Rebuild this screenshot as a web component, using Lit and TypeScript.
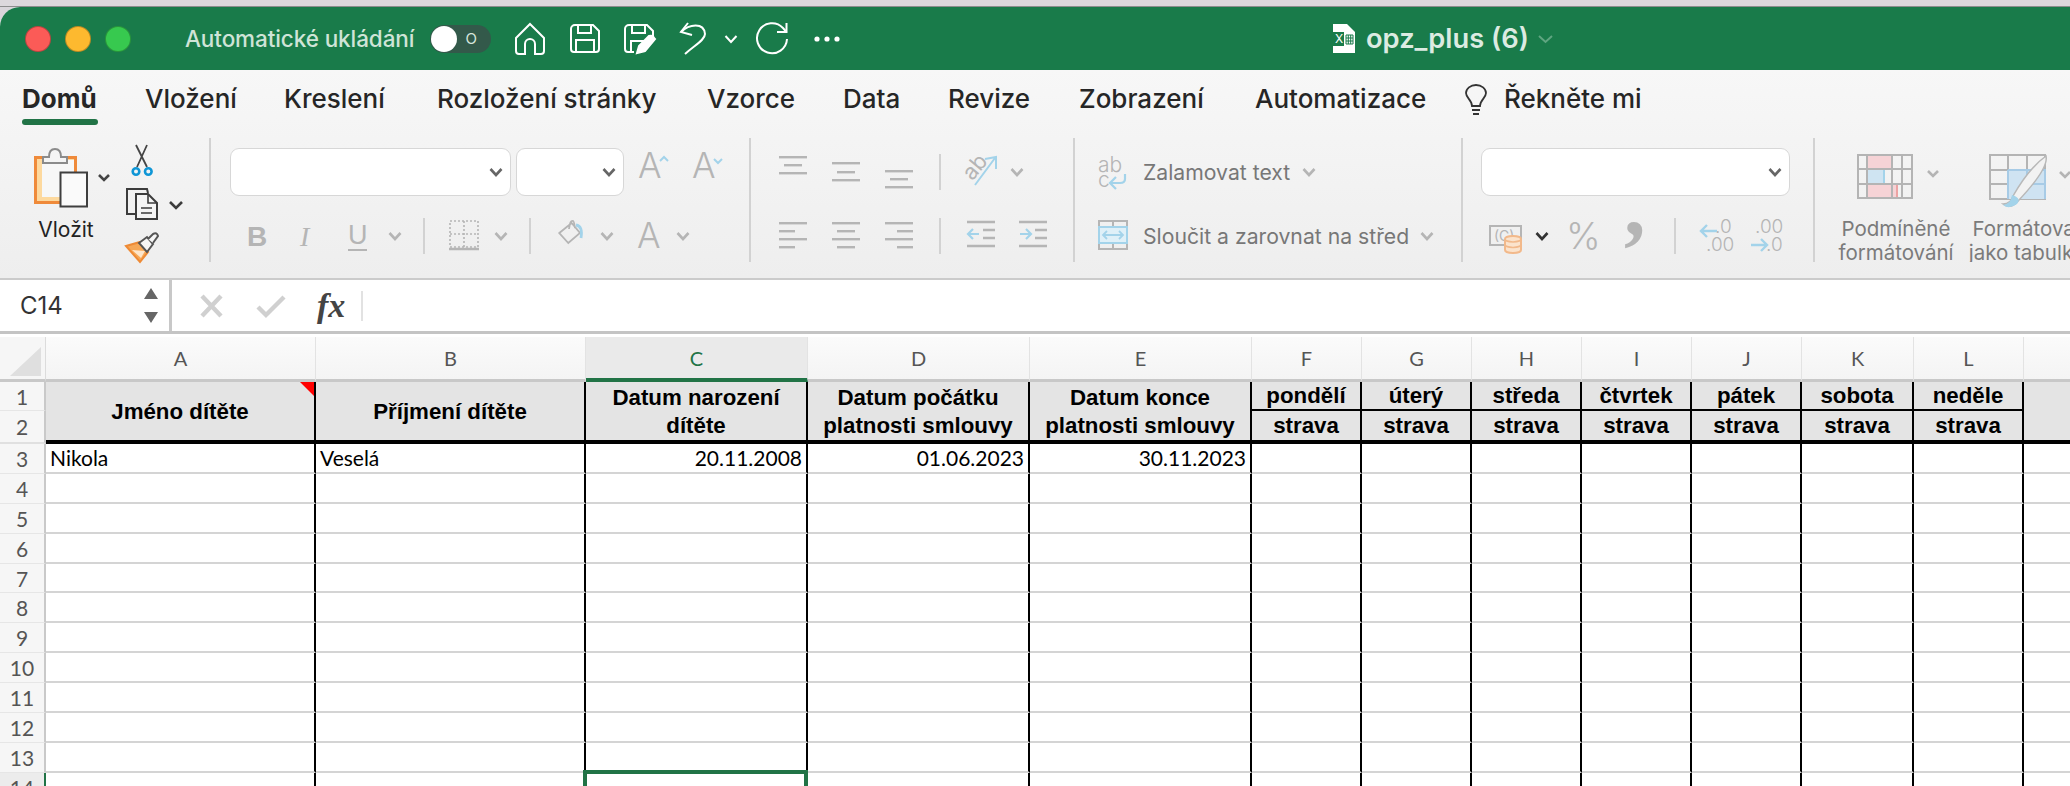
import { LitElement, html, css, svg } from "lit";
import { customElement } from "lit/decorators.js";

const GRAY = "#b5b5b5";
const BLUE = "#a3d3ea";

const chev = (color = GRAY) => html`<svg class="chev" width="14" height="36" viewBox="0 0 14 36"><path d="M1.5 15 L7 21 L12.5 15" fill="none" stroke=${color} stroke-width="2.6"/></svg>`;
const lines = (rows: [number, number, number][], w = 30) => html`<svg width=${w} height="36" viewBox="0 0 ${w} 36">${rows.map(([y, a, b]) => svg`<rect x=${a} y=${y} width=${b - a} height="2.4" fill=${GRAY}/>`)}</svg>`;

const COLS = ["A", "B", "C", "D", "E", "F", "G", "H", "I", "J", "K", "L", ""];
const DAYS = ["pondělí", "úterý", "středa", "čtvrtek", "pátek", "sobota", "neděle"];

@customElement("app-root")
export class AppRoot extends LitElement {
  static styles = css`
    :host { display: block; width: 2070px; height: 786px; overflow: hidden; background: #d9d5da; font-family: Inter, "Liberation Sans", sans-serif; position: relative; }
    svg { display: block; overflow: visible; }
    .strip { height: 6px; background: #dcd8dc; border-bottom: 1px solid #8d8d8d; }
    .win { background: #fff; border-top-left-radius: 20px; overflow: hidden; }
    .title { height: 63px; background: #197b4a; display: grid; align-items: center; padding-left: 25px;
      grid-template-columns: 40px 40px 80px 245px 85px 55px 54px 55px 45px 32px 58px 519px 33px 172px 40px; }
    .light { width: 26px; height: 26px; border-radius: 50%; box-sizing: border-box; border: 1px solid rgba(0,0,0,.25); }
    .red { background: #fb5b57; } .yellow { background: #fdb92f; } .green { background: #37c94f; }
    .auto { color: #cfe4d7; font-size: 22.5px; font-weight: 500; letter-spacing: -.1px; white-space: nowrap; }
    .toggle { width: 61px; height: 28px; border-radius: 14px; background: #33594a; position: relative; display: flex; align-items: center; justify-content: flex-end; padding-right: 14px; box-sizing: border-box; color: #d6e6dc; font-size: 15px; }
    .knob { position: absolute; left: 1px; top: 1px; width: 26px; height: 26px; border-radius: 50%; background: #fff; }
    .fname { color: #dcebe2; font-size: 27.3px; font-weight: 600; white-space: nowrap; }

    .ribbon { height: 210px; box-sizing: border-box; background: linear-gradient(#f7f7f7, #eeeeee); border-bottom: 2px solid #cbcbcb; }
    .tabs { height: 60px; display: grid; padding-left: 22px; color: #262626; font-size: 26px; font-weight: 500;
      grid-template-columns: 123px 139px 153px 270px 136px 105px 131px 176px 210px 39px auto; }
    .tab { padding-top: 13px; line-height: 32px; white-space: nowrap; }
    .tab.on { font-weight: 700; }
    .bar { width: 76px; height: 6px; border-radius: 3px; background: #217346; margin-top: 4px; }
    .bulb { padding-top: 15px; }
    .groups { display: flex; height: 124px; margin-top: 8px; }
    .sep { width: 2px; height: 124px; background: #d2d2d2; flex: none; }
    .vsep { width: 2px; height: 36px; background: #d2d2d2; }
    .clip { width: 209px; flex: none; display: flex; padding-left: 28px; box-sizing: border-box; }
    .paste { width: 98px; padding-top: 10px; }
    .vlozit { width: 76px; text-align: center; font-size: 21px; color: #222; margin-top: 10px; line-height: 24px; }
    .small { display: flex; flex-direction: column; gap: 12px; padding-top: 6px; }
    .g-font { width: 538px; flex: none; padding-top: 10px; box-sizing: border-box; }
    .sel { height: 48px; box-sizing: border-box; background: #fff; border: 1.5px solid #d7d7d7; border-radius: 9px; display: flex; align-items: center; justify-content: flex-end; padding-right: 7px; }
    .r1 { display: grid; height: 48px; padding-left: 19px; grid-template-columns: 286px 122px 54px 60px; }
    .s1 { width: 281px; } .s2 { width: 108px; }
    .r2 { display: grid; height: 36px; margin-top: 22px; padding-left: 37px; align-items: center;
      grid-template-columns: 52px 48px 40px 35px 26px 45px 35px 29px 42px 37px 39px 20px; }
    .g-align { width: 322px; flex: none; padding: 16px 0 0 28px; box-sizing: border-box; }
    .ar { display: grid; height: 36px; grid-template-columns: 53px 53px 54px 25px 46px 20px; }
    .ar2 { margin-top: 28px; grid-template-columns: 53px 53px 54px 27px 52px 30px; }
    .g-wrap { width: 386px; flex: none; padding: 16px 0 0 23px; box-sizing: border-box; }
    .wr { display: grid; height: 36px; align-items: center; grid-template-columns: 45px 159px 20px; color: #777; font-size: 21.2px; white-space: nowrap; }
    .wr2 { margin-top: 28px; grid-template-columns: 45px 277px 20px; }
    .g-num { width: 350px; flex: none; padding: 10px 0 0 18px; box-sizing: border-box; }
    .s3 { width: 309px; }
    .nr { display: grid; height: 36px; margin-top: 22px; padding-left: 8px; align-items: center; grid-template-columns: 46px 31px 61px 47px 25px 51px 40px; }
    .g-style { flex: 1; display: grid; grid-template-columns: 127px 126px; padding-left: 22px; box-sizing: border-box; color: #7b7b7b; font-size: 20.5px; line-height: 24px; overflow: hidden; white-space: nowrap; }
    .st-ic { height: 79px; box-sizing: border-box; padding: 16px 0 0 20px; }
    .st-ic.second { padding-left: 25px; }
    .st-t { width: 118px; text-align: center; }
    .st-t2 { width: 126px; }

    .fbar { height: 54px; box-sizing: border-box; display: flex; background: #fff; border-bottom: 3px solid #c4c4c4; }
    .name { width: 172px; flex: none; box-sizing: border-box; border-right: 3px solid #c8c8c8; padding: 0 10px 0 20px; display: flex; align-items: center; justify-content: space-between; font-size: 24px; color: #333; }
    .fx { display: grid; grid-template-columns: 56px 61px 44px 2px; align-items: center; padding-left: 28px; }
    .fxt { font-family: "Liberation Serif", serif; font-style: italic; font-weight: 700; font-size: 34px; color: #444; line-height: 34px; }
    .fxs { width: 2px; height: 30px; background: #e2e2e2; }

    .gap { height: 3px; background: #fff; }
    .grid { display: grid; background: #fff; font-family: Lato, "Liberation Sans", sans-serif;
      grid-template-columns: 46px 270px 270px 222px 222px 222px 110px 110px 110px 110px 110px 112px 110px 47px;
      grid-template-rows: 45px 29px 33px; grid-auto-rows: 29.9px; }
    .corner { background: #f6f6f6; border-right: 1px solid #dcdcdc; border-bottom: 3px solid #c8c8c8; box-sizing: border-box; padding: 10px 0 0 10px; }
    .ch { background: linear-gradient(#fbfbfb, #f4f4f4); border-bottom: 3px solid #c8c8c8; border-right: 1px solid #e3e3e3; box-sizing: border-box; color: #555; font-size: 20px; display: flex; align-items: center; justify-content: center; }
    .ch.cur { color: #217346; border-bottom: 4px solid #217346; background: #eaeaea; }
    .rh { background: #f6f6f6; border-right: 2px solid #c9c9c9; border-bottom: 1px solid #e6e6e6; box-sizing: border-box; color: #555; font-size: 21px; display: flex; align-items: center; justify-content: center; }
    .rh.h1 { border-bottom: 2px solid #e0e0e0; }
    .rh.cur { border-right-color: #217346; background: #ececec; }
    .hd { background: #e4e4e4; border-right: 2.5px solid #000; box-sizing: border-box; color: #000; font-family: "Liberation Sans", sans-serif; font-weight: 700; font-size: 22.3px; line-height: 28px; text-align: center; display: flex; align-items: center; justify-content: center; position: relative; white-space: pre-line; }
    .hd.span { grid-row: span 2; border-bottom: 4px solid #000; padding-top: 2px; }
    .hd.top { border-bottom: 2.5px solid #000; padding-top: 0; }
    .hd.bot { border-bottom: 4px solid #000; }
    .hd.last { border-right: 0; }
    .tri { position: absolute; right: 0; top: 0; width: 14px; height: 14px; background: #f00; clip-path: polygon(0 0, 100% 0, 100% 100%); }
    .c { border-right: 2.5px solid #000; border-bottom: 2.5px solid #d4d4d4; box-sizing: border-box; color: #000; font-size: 21px; padding: 0 4px; display: flex; align-items: center; white-space: nowrap; position: relative; }
    .c.num { justify-content: flex-end; }
    .c.last { border-right: 0; }
    .cursor { position: absolute; left: -3px; right: -2px; top: -3px; height: 40px; border: 4px solid #217346; box-sizing: border-box; }
  `;

  private doc(edit: boolean) {
    return html`<svg width="32" height="30" viewBox="0 0 32 30" fill="none" stroke="#fff" stroke-width="2">
      ${edit
        ? svg`<path d="M10 28 H4 A3 3 0 0 1 1 25 V5 A4 4 0 0 1 5 1 H23 L29 7 V13"/><path d="M7 28 V17 H20"/><path d="M13 29 L15 22 L25 12 Q29 11 30 14 L31 15 L21 27 Z" fill="#fff"/>`
        : svg`<path d="M5 1 H23 L29 7 V25 A3 3 0 0 1 26 28 H4 A3 3 0 0 1 1 25 V5 A4 4 0 0 1 5 1 Z"/><path d="M6 28 V16 H24 V28"/>`}
      <path d="M8 1 V9 H21 V1"/>
    </svg>`;
  }

  private titlebar() {
    return html`<div class="title">
      <div class="light red"></div><div class="light yellow"></div><div class="light green"></div>
      <div class="auto">Automatické ukládání</div>
      <div class="toggle"><span class="knob"></span>O</div>
      <svg width="30" height="32" viewBox="0 0 30 32" fill="none" stroke="#fff" stroke-width="2"><path d="M15 1 L29 15 V28 A3 3 0 0 1 26 31 H20 V21 A5 5 0 0 0 10 21 V31 H4 A3 3 0 0 1 1 28 V15 Z"/></svg>
      ${this.doc(false)}
      ${this.doc(true)}
      <svg width="30" height="34" viewBox="0 0 30 34" fill="none" stroke="#fff" stroke-width="2"><path d="M9 1 L2 10 L13 13"/><path d="M2 10 C10 2 25 0 26 12 C26 18 16 23 6 32"/></svg>
      <svg width="14" height="10" viewBox="0 0 14 10" fill="none" stroke="#fff" stroke-width="2"><path d="M1.5 2 L7 8 L12.5 2"/></svg>
      <svg width="34" height="34" viewBox="0 0 34 34" fill="none" stroke="#fff" stroke-width="2"><path d="M31 17 A15 15 0 1 1 27 6 L30.5 10"/><path d="M30.5 1 V10 H21"/></svg>
      <svg width="26" height="6" viewBox="0 0 26 6" fill="#fff"><circle cx="3" cy="3" r="2.6"/><circle cx="13" cy="3" r="2.6"/><circle cx="23" cy="3" r="2.6"/></svg>
      <svg width="23" height="30" viewBox="0 0 23 30"><path d="M0 0 H14 L22 8 V29 H0 Z" fill="#fff"/><rect x="0" y="8" width="11" height="14" fill="#197b4a"/><text x="2" y="19" font-size="12" fill="#fff" font-family="Inter">X</text><path d="M13 11 h7 v9 h-7 z M15.3 11 v9 M17.7 11 v9 M13 14 h7 M13 17 h7" stroke="#197b4a" fill="none" stroke-width="1"/></svg>
      <div class="fname">opz_plus (6)</div>
      <svg width="15" height="10" viewBox="0 0 15 10" fill="none" stroke="#5fa580" stroke-width="2"><path d="M1 2 L7.5 8 L14 2"/></svg>
    </div>`;
  }

  private tabs() {
    const t = ["Vložení", "Kreslení", "Rozložení stránky", "Vzorce", "Data", "Revize", "Zobrazení", "Automatizace"];
    return html`<div class="tabs">
      <div class="tab on">Domů<div class="bar"></div></div>
      ${t.map((x) => html`<div class="tab">${x}</div>`)}
      <div class="bulb"><svg width="22" height="32" viewBox="0 0 22 32" fill="none" stroke="#333" stroke-width="1.8"><path d="M7 21 C7 15 1 13 1 8 A10 8 0 0 1 21 8 C21 13 15 15 15 21 Z"/><path d="M7 25 H15 M8 29 H14"/></svg></div>
      <div class="tab">Řekněte mi</div>
    </div>`;
  }

  private clipboard() {
    return html`<div class="clip">
      <div class="paste">
        <svg width="84" height="60" viewBox="28 148 84 60">
          <rect x="35.5" y="157.5" width="40" height="45" fill="#fdd99e" stroke="#ef8a3a" stroke-width="3"/>
          <rect x="42" y="160" width="32" height="37" fill="#f7f7f7"/>
          <path d="M43 163 V157 H49 Q49 149 55 149 Q61 149 61 157 H67 V163 Z" fill="#f4f4f4" stroke="#8b8b8b" stroke-width="2"/>
          <rect x="60.5" y="172.5" width="26.5" height="34" fill="#fafafa" stroke="#3f3f3f" stroke-width="2"/>
          <path d="M99 175 L104 180 L109 175" fill="none" stroke="#444" stroke-width="2.6"/>
        </svg>
        <div class="vlozit">Vložit</div>
      </div>
      <div class="small">
        <svg width="60" height="32" viewBox="0 0 60 32" fill="none"><path d="M10 1 L21 23 M21 1 L11 23" stroke="#444" stroke-width="1.8"/><circle cx="10" cy="27.5" r="3.3" stroke="#0f96d6" stroke-width="2.6"/><circle cx="22.3" cy="27.5" r="3.3" stroke="#0f96d6" stroke-width="2.6"/></svg>
        <svg width="60" height="32" viewBox="0 0 60 32" fill="none" stroke="#3c3c3c" stroke-width="2"><path d="M11 1 H1 V26 H10"/><path d="M11 1 H21 L22 5"/><path d="M10 6 H22 L31 15 V31 H10 Z" fill="#f5f5f5"/><path d="M22 6 V15 H31 M15 20 H26 M15 25 H26" stroke-width="1.6"/><path d="M44 14 L50 20 L56 14" stroke-width="2.6"/></svg>
        <svg width="34" height="31" viewBox="0 0 34 31" fill="none"><path d="M0 14 L14 10 L22 20 L14 30 Z" fill="#f6a756" stroke="#ee8a35" stroke-width="2"/><path d="M6 18 L19 19 L15 26 Z" fill="#fde6cc"/><path d="M13 11 L21 5 L27 12 L21 20 Z" fill="#f6f6f6" stroke="#555" stroke-width="2"/><path d="M22 7 L27 2 Q31 0 32 4 L27 11" fill="#f6f6f6" stroke="#555" stroke-width="2"/></svg>
      </div>
    </div>`;
  }

  private fontGroup() {
    const tx = (extra: unknown, fill = GRAY) => html`<svg width="30" height="36" viewBox="0 0 30 36"><text x="0" y="30" font-size="35" font-family="Inter" font-weight="300" fill=${fill}>A</text>${extra}</svg>`;
    return html`<div class="g-font">
      <div class="r1">
        <div class="sel s1">${chev("#666")}</div>
        <div class="sel s2">${chev("#666")}</div>
        ${tx(svg`<path d="M22 13 L26 9 L30 13" fill="none" stroke=${BLUE} stroke-width="2"/>`)}
        ${tx(svg`<path d="M22 11 L26 15 L30 11" fill="none" stroke=${BLUE} stroke-width="2"/>`)}
      </div>
      <div class="r2">
        <svg width="16" height="36" viewBox="0 0 16 36"><text x="-1" y="28" font-size="28" font-weight="700" font-family="Liberation Sans" fill=${GRAY}>B</text></svg>
        <svg width="16" height="36" viewBox="0 0 16 36"><text x="0" y="28" font-size="28" font-style="italic" font-family="Liberation Serif" fill=${GRAY}>I</text></svg>
        <svg width="20" height="36" viewBox="0 0 20 36"><text x="0" y="26" font-size="27" font-family="Liberation Sans" fill=${GRAY}>U</text><rect y="31" width="19" height="2" fill=${GRAY}/></svg>
        ${chev()}
        <div class="vsep"></div>
        <svg width="30" height="36" viewBox="0 0 30 36" fill="none" stroke=${GRAY} stroke-width="1.6" stroke-dasharray="2 2"><rect x="1" y="3" width="28" height="26"/><path d="M15 3 V29 M1 16 H29"/><path d="M0 31 H30" stroke-dasharray="none" stroke-width="2.4"/></svg>
        ${chev()}
        <div class="vsep"></div>
        <svg width="26" height="36" viewBox="0 0 26 36" fill="none"><path d="M1.3 15 L13.6 5 L22 15 L10.3 25 Z M11 11 Q12 2 15 3 Q16 3 17 10" stroke=${GRAY} stroke-width="1.8"/><path d="M18 7 Q25 8 23 20" stroke=${BLUE} stroke-width="2.8"/></svg>
        ${chev()}
        ${tx("")}
        ${chev()}
      </div>
    </div>`;
  }

  private alignGroup() {
    const L = lines;
    return html`<div class="g-align">
      <div class="ar">
        ${L([[2, 0, 28], [10, 5, 23], [18, 0, 28]])}
        ${L([[8, 0, 28], [17, 5, 23], [25, 0, 28]])}
        ${L([[16, 0, 28], [24, 5, 23], [32, 0, 28]])}
        <div class="vsep"></div>
        <svg width="34" height="36" viewBox="0 0 34 36"><text x="0" y="22" font-size="22" font-family="Inter" fill=${GRAY} transform="rotate(-50 10 16)">ab</text><path d="M11 31 L31 4 M21 5 L32 3 L32 15" fill="none" stroke=${BLUE} stroke-width="2"/></svg>
        ${chev()}
      </div>
      <div class="ar ar2">
        ${L([[4, 0, 28], [12, 0, 16], [20, 0, 28], [28, 0, 16]])}
        ${L([[4, 0, 28], [12, 5, 23], [20, 0, 28], [28, 5, 23]])}
        ${L([[4, 0, 28], [12, 12, 28], [20, 0, 28], [28, 12, 28]])}
        <div class="vsep"></div>
        <svg width="30" height="36" viewBox="0 0 30 36"><path d="M1 4 H29 M17 12 H29 M17 20 H29 M1 28 H29" stroke=${GRAY} stroke-width="2.4"/><path d="M13 16 H2 M7 11 L2 16 L7 21" fill="none" stroke=${BLUE} stroke-width="2.2"/></svg>
        <svg width="30" height="36" viewBox="0 0 30 36"><path d="M1 4 H29 M17 12 H29 M17 20 H29 M1 28 H29" stroke=${GRAY} stroke-width="2.4"/><path d="M2 16 H13 M8 11 L13 16 L8 21" fill="none" stroke=${BLUE} stroke-width="2.2"/></svg>
      </div>
    </div>`;
  }

  private wrapGroup() {
    return html`<div class="g-wrap">
      <div class="wr">
        <svg width="30" height="36" viewBox="0 0 30 36"><text x="0" y="18" font-size="21" font-family="Inter" font-weight="300" fill=${GRAY}>ab</text><text x="0" y="33" font-size="21" font-family="Inter" font-weight="300" fill=${GRAY}>c</text><path d="M27 20 V25 Q27 29 22 29 H13 M18 23 L12 29 L18 35" fill="none" stroke=${BLUE} stroke-width="2.2"/></svg>
        <span>Zalamovat text</span>${chev()}
      </div>
      <div class="wr wr2">
        <svg width="30" height="36" viewBox="0 0 30 36" fill="none"><rect x="1" y="3" width="28" height="28" stroke=${GRAY} stroke-width="2"/><path d="M15 3 V9 M15 25 V31" stroke=${GRAY} stroke-width="2"/><rect x="1" y="9" width="28" height="16" fill="#dff0f8" stroke=${BLUE} stroke-width="2"/><path d="M5 17 H25 M9 13 L5 17 L9 21 M21 13 L25 17 L21 21" stroke=${BLUE} stroke-width="1.8"/></svg>
        <span>Sloučit a zarovnat na střed</span>${chev()}
      </div>
    </div>`;
  }

  private numGroup() {
    return html`<div class="g-num">
      <div class="sel s3">${chev("#666")}</div>
      <div class="nr">
        <svg width="34" height="36" viewBox="0 0 34 36" fill="none"><rect x="1" y="8" width="31" height="19" stroke=${GRAY} stroke-width="2"/><text x="5" y="23" font-size="14" font-family="Inter" fill=${GRAY}>(C)</text><path d="M16 21 A8 3 0 0 1 32 21 V32 A8 3 0 0 1 16 32 Z" fill="#fbe3cc" stroke="#f2b98b" stroke-width="2"/><path d="M16 21 A8 3 0 0 0 32 21 M16 26.5 A8 3 0 0 0 32 26.5" stroke="#f2b98b" stroke-width="1.6"/></svg>
        ${chev("#333")}
        <svg width="32" height="36" viewBox="0 0 32 36"><text x="0" y="31" font-size="37" font-weight="300" font-family="Inter" fill=${GRAY}>%</text></svg>
        <svg width="18" height="36" viewBox="0 0 18 36"><text x="-3" y="17" font-size="86" font-weight="700" font-family="Liberation Serif" fill=${GRAY}>,</text></svg>
        <div class="vsep"></div>
        <svg width="32" height="36" viewBox="0 0 32 36"><text x="16" y="15" font-size="19" font-family="Inter" font-weight="300" fill=${GRAY}>.0</text><text x="7" y="33" font-size="19" font-family="Inter" font-weight="300" fill=${GRAY}>.00</text><path d="M18 13 H2 M8 7 L2 13 L8 19" fill="none" stroke=${BLUE} stroke-width="2.4"/></svg>
        <svg width="34" height="36" viewBox="0 0 34 36"><text x="5" y="15" font-size="19" font-family="Inter" font-weight="300" fill=${GRAY}>.00</text><text x="16" y="33" font-size="19" font-family="Inter" font-weight="300" fill=${GRAY}>.0</text><path d="M1 27 H17 M11 21 L17 27 L11 33" fill="none" stroke=${BLUE} stroke-width="2.4"/></svg>
      </div>
    </div>`;
  }

  private styleGroup() {
    const g = "#b4b4b4";
    const cond = html`<svg width="84" height="45" viewBox="0 0 84 45" fill="none">
      <rect x="10" y="1" width="25" height="14" fill="#f6d3d6" stroke="#eca3a3" stroke-width="2"/>
      <rect x="10" y="15" width="17" height="15" fill="#cfe4f2" stroke=${BLUE} stroke-width="2"/>
      <rect x="10" y="30" width="30" height="14" fill="#f6d3d6" stroke="#eca3a3" stroke-width="2"/>
      <path d="M1 1 H55 V44 H1 Z M1 15 H55 M1 30 H55 M10 1 V44 M35 1 V44 M45 1 V44" stroke=${g} stroke-width="2"/>
      <path d="M71 17 L76 22 L81 17" stroke=${g} stroke-width="2.6"/>
    </svg>`;
    const tab = html`<svg width="84" height="54" viewBox="0 0 84 54" fill="none">
      <path d="M1 1 H56 V45 H1 Z M1 16 H56 M1 30 H56 M19 1 V45 M38 1 V45" stroke=${g} stroke-width="2"/>
      <path d="M19 16 H56 V45 H19 Z" fill="#cfe3f2"/><path d="M19 16 H56 V45 M19 16 V45 M38 16 V30 H56" stroke="#a7cbe6" stroke-width="2"/>
      <path d="M24 42 Q40 14 57 2 Q60 14 30 46 Q22 56 14 50 Q22 50 24 42" fill="#f2f2f2" stroke="#b8b8b8" stroke-width="1.5"/>
      <path d="M23 41 Q33 44 28 50 Q20 56 14 51 Q22 50 23 41" fill=${BLUE}/>
      <path d="M71 18 L76 23 L81 18" stroke=${g} stroke-width="2.6"/>
    </svg>`;
    return html`<div class="g-style">
      <div>
        <div class="st-ic">${cond}</div>
        <div class="st-t">Podmíněné<br />formátování</div>
      </div>
      <div>
        <div class="st-ic second">${tab}</div>
        <div class="st-t st-t2">Formátovat<br />jako tabulku</div>
      </div>
    </div>`;
  }

  render() {
    const rows = [];
    for (let r = 3; r <= 14; r++) {
      rows.push(html`<div class="rh ${r === 14 ? "cur" : ""}">${r}</div>`);
      COLS.forEach((c, i) => {
        const v = r === 3 ? ["Nikola", "Veselá", "20.11.2008", "01.06.2023", "30.11.2023"][i] ?? "" : "";
        rows.push(html`<div class="c ${i >= 2 ? "num" : ""} ${i === 12 ? "last" : ""}">${v}${r === 14 && c === "C" ? html`<div class="cursor"></div>` : ""}</div>`);
      });
    }
    return html`
      <div class="strip"></div>
      <div class="win">
        ${this.titlebar()}
        <div class="ribbon">
          ${this.tabs()}
          <div class="groups">
            ${this.clipboard()}<div class="sep"></div>
            ${this.fontGroup()}<div class="sep"></div>
            ${this.alignGroup()}<div class="sep"></div>
            ${this.wrapGroup()}<div class="sep"></div>
            ${this.numGroup()}<div class="sep"></div>
            ${this.styleGroup()}
          </div>
        </div>
        <div class="fbar">
          <div class="name">C14
            <svg width="16" height="36" viewBox="0 0 16 36" fill="#666"><path d="M8 0 L15 11 H1 Z M1 24 H15 L8 35 Z"/></svg>
          </div>
          <div class="fx">
            <svg width="24" height="22" viewBox="0 0 24 22" stroke="#d0d0d0" stroke-width="4.4"><path d="M2 1 L21 21 M21 1 L2 21"/></svg>
            <svg width="30" height="22" viewBox="0 0 30 22" fill="none" stroke="#d0d0d0" stroke-width="4.4"><path d="M2 12 L10 20 L28 2"/></svg>
            <span class="fxt">fx</span>
            <div class="fxs"></div>
          </div>
        </div>
        <div class="gap"></div>
        <div class="grid">
          <div class="corner"><svg width="31" height="29" viewBox="0 0 31 29"><path d="M31 0 V29 H0 Z" fill="#dfdfdf"/></svg></div>
          ${COLS.map((c) => html`<div class="ch ${c === "C" ? "cur" : ""}">${c}</div>`)}
          <div class="rh">1</div>
          <div class="hd span">Jméno dítěte<div class="tri"></div></div>
          <div class="hd span">Příjmení dítěte</div>
          <div class="hd span">Datum narození
dítěte</div>
          <div class="hd span">Datum počátku
platnosti smlouvy</div>
          <div class="hd span">Datum konce
platnosti smlouvy</div>
          ${DAYS.map((d) => html`<div class="hd top">${d}</div>`)}
          <div class="hd span last"></div>
          <div class="rh h1">2</div>
          ${DAYS.map(() => html`<div class="hd bot">strava</div>`)}
          ${rows}
        </div>
      </div>`;
  }
}
